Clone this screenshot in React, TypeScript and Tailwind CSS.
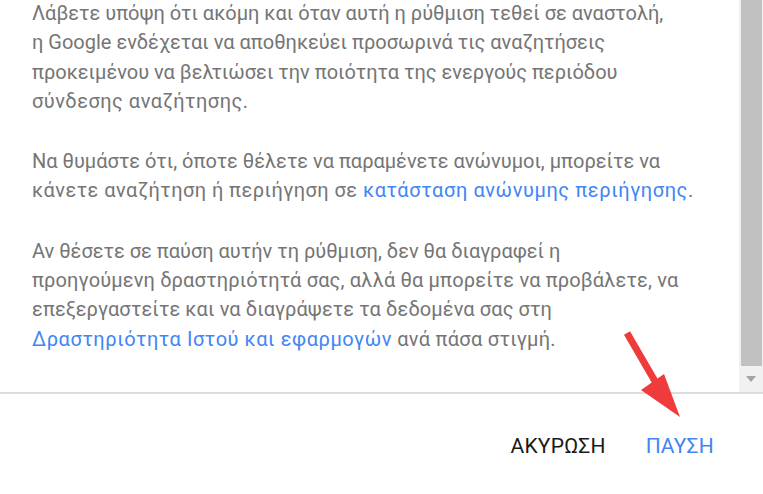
import React from "react";

export default function App() {
  return (
    <div className="relative w-[763px] h-[494px] bg-white overflow-hidden" style={{ fontFamily: "Roboto, 'Noto Sans', sans-serif" }}>
      <div className="flex h-[392px]">
        <div className="flex-1 pl-[32px] pr-[10px] text-[20px] leading-[29.3px] text-[#757575] -mt-[1px] whitespace-nowrap">
          <p>
            Λάβετε υπόψη ότι ακόμη και όταν αυτή η ρύθμιση τεθεί σε αναστολή,<br />
            η Google ενδέχεται να αποθηκεύει προσωρινά τις αναζητήσεις<br />
            προκειμένου να βελτιώσει την ποιότητα της ενεργούς περιόδου<br />
            <span className="tracking-[0.5px]">σύνδεσης αναζήτησης.</span>
          </p>
          <p className="mt-[31px]">
            Να θυμάστε ότι, όποτε θέλετε να παραμένετε ανώνυμοι, μπορείτε να<br />
            <span className="tracking-[0.45px]">κάνετε αναζήτηση ή περιήγηση σε </span>
            <span className="text-[#4285f4] tracking-[0.6px]">κατάσταση ανώνυμης περιήγησης</span>.
          </p>
          <p className="mt-[31px]">
            Αν θέσετε σε παύση αυτήν τη ρύθμιση, δεν θα διαγραφεί η<br />
            <span className="tracking-[0.15px]">προηγούμενη δραστηριότητά σας, αλλά θα μπορείτε να προβάλετε, να</span><br />
            <span className="tracking-[0.1px]">επεξεργαστείτε και να διαγράψετε τα δεδομένα σας στη</span><br />
            <span className="text-[#4285f4] tracking-[0.55px]">Δραστηριότητα Ιστού και εφαρμογών</span>
            <span className="tracking-[0.3px]"> ανά πάσα στιγμή.</span>
          </p>
        </div>
        <div className="w-[24px] bg-[#f1f1f1] flex flex-col">
          <div className="ml-[2px] mr-[1px] h-[366px] bg-[#c1c1c1]" />
          <div className="flex-1 flex items-center justify-center">
            <svg width="10" height="6" viewBox="0 0 10 6"><path d="M0 0 L10 0 L5 6 Z" fill="#a3a3a3" /></svg>
          </div>
        </div>
      </div>
      <div className="h-[2px] bg-[#dcdcdc]" />
      <div className="flex justify-end items-center gap-[40px] pr-[49px] pt-[37px] text-[21px] font-normal tracking-[0.2px]">
        <span className="text-[#1a1a1a]">ΑΚΥΡΩΣΗ</span>
        <span className="text-[#4285f4]">ΠΑΥΣΗ</span>
      </div>
      <svg className="absolute left-[620px] top-[328px]" width="70" height="95" viewBox="0 0 70 95">
        <path d="M7 5 L36 55" stroke="#ef3b3b" strokeWidth="7" strokeLinecap="butt" />
        <path d="M21 62 L44 46 L60 89 Z" fill="#ef3b3b" />
      </svg>
    </div>
  );
}
